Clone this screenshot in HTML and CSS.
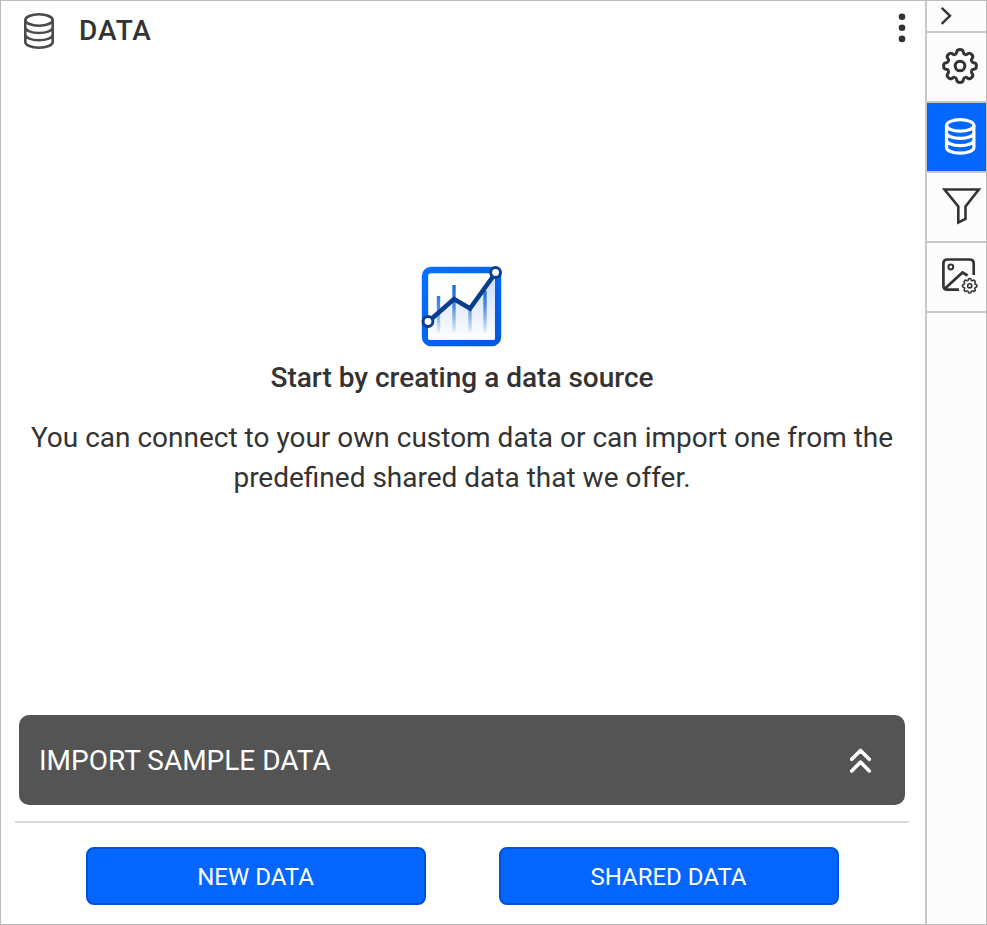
FILE: index.html
```html
<!DOCTYPE html>
<html lang="en">
<head>
<meta charset="utf-8">
<title>Data</title>
<link rel="stylesheet" href="styles.css">
</head>
<body>
<svg class="symbols" aria-hidden="true">
  <defs>
    <path id="tooth" d="M-4.8-11.5C-3.2-12.2-3.5-13.2-3.1-14.6C-2.7-16.1-1.7-16.4 0-16.4S2.7-16.1 3.1-14.6C3.5-13.2 3.2-12.2 4.8-11.5"/>
    <g id="gear">
      <use href="#tooth"/><use href="#tooth" transform="rotate(45)"/><use href="#tooth" transform="rotate(90)"/><use href="#tooth" transform="rotate(135)"/><use href="#tooth" transform="rotate(180)"/><use href="#tooth" transform="rotate(225)"/><use href="#tooth" transform="rotate(270)"/><use href="#tooth" transform="rotate(315)"/>
      <circle r="4.8"/>
    </g>
    <g id="database">
      <ellipse cx="15" cy="7" rx="13.7" ry="5.7"/>
      <path d="M1.3 7V29C1.3 32.2 7.4 34.7 15 34.7S28.7 32.2 28.7 29V7M1.3 14.3C1.3 17.5 7.4 20 15 20S28.7 17.5 28.7 14.3M1.3 21.6C1.3 24.8 7.4 27.3 15 27.3S28.7 24.8 28.7 21.6"/>
    </g>
  </defs>
</svg>
<div class="window">
  <main class="panel">
    <header class="header">
      <svg class="header-icon" width="30" height="36" viewBox="0 0 30 36"><use href="#database"/></svg>
      <h1 class="title">DATA</h1>
      <svg class="more" width="8" height="30" viewBox="0 0 8 30"><circle cx="4" cy="3.700" r="3.3"/><circle cx="4" cy="14.800" r="3.3"/><circle cx="4" cy="25.900" r="3.3"/></svg>
    </header>
    <section class="empty">
      <svg class="chart" width="82" height="82" viewBox="0 0 82 82">
        <defs>
          <linearGradient id="frame" x2="1" y2="1"><stop stop-color="#0870ff"/><stop offset="1" stop-color="#0058dc"/></linearGradient>
          <linearGradient id="bar" gradientUnits="userSpaceOnUse" x1="0" y1="18" x2="0" y2="68"><stop stop-color="#1767d8"/><stop offset=".45" stop-color="#4b88e0"/><stop offset="1" stop-color="#e9f1fc"/></linearGradient>
          <linearGradient id="area" x2="0" y2="1"><stop stop-color="#c9dcf9"/><stop offset="1" stop-color="#fff"/></linearGradient>
        </defs>
        <rect x="4" y="5" width="73" height="73" rx="6" fill="#fff" stroke="url(#frame)" stroke-width="6.400"/>
        <path d="M7.200 57L33 34L49 43L73.800 9V74.800H7.200Z" fill="url(#area)" stroke="none"/>
        <path d="M17.500 31V67M33 20V67M49 43V67M64 26V67" fill="none" stroke="url(#bar)" stroke-width="3.400"/>
        <path d="M7.500 56.500L33 34L49 43.500L74.500 8" class="trend"/>
        <circle cx="7" cy="56.500" r="4.900" class="node"/><circle cx="74.600" cy="7.500" r="4.900" class="node"/>
      </svg>
      <h2 class="heading">Start by creating a data source</h2>
      <p class="message">You can connect to your own custom data or can import one from the predefined shared data that we offer.</p>
    </section>
    <div class="sample">
      <span>IMPORT SAMPLE DATA</span>
      <svg width="22" height="26" viewBox="0 0 22 26"><path d="M1.700 11.300L10.500 2.500L19.300 11.300M1.700 22.900L10.500 14.100L19.300 22.900"/></svg>
    </div>
    <footer class="actions">
      <button class="button">NEW DATA</button>
      <button class="button">SHARED DATA</button>
    </footer>
  </main>
  <nav class="sidebar">
    <div class="tab collapse"><svg width="59" height="30" viewBox="0 0 59 30"><path d="M14.700 6.800L23 14.800L14.700 22.800"/></svg></div>
    <div class="tab"><svg width="59" height="68" viewBox="0 0 59 68"><use href="#gear" x="33" y="33"/></svg></div>
    <div class="tab active"><svg width="59" height="68" viewBox="0 0 59 68"><use href="#database" x="18.200" y="15.400"/></svg></div>
    <div class="tab"><svg width="59" height="68" viewBox="0 0 59 68"><path class="funnel" d="M17.500 16.500H51.800L38.500 33.500V46L31.300 49.500V33.500Z"/></svg></div>
    <div class="tab"><svg width="59" height="68" viewBox="0 0 59 68"><g class="picture"><path d="M32 46.700H20.500Q16.400 46.700 16.400 42.500V20.500Q16.400 16.500 20.500 16.500H42.500Q46.700 16.500 46.700 20.500V32M18 45.500L35.500 29.500L40.500 32.500"/><circle class="sun" cx="23.800" cy="24" r="2.400"/></g><g class="small-gear" transform="translate(42.700 42.800) scale(.44)"><use href="#gear"/></g></svg></div>
  </nav>
</div>
</body>
</html>
```

FILE: styles.css
```css
* { box-sizing: border-box; }
body { margin: 0; font-family: Roboto, sans-serif; color: #333; background: #fff; }
svg { display: block; fill: none; stroke: #333; flex: none; }
.symbols { position: absolute; width: 0; height: 0; }
.window { display: flex; width: 987px; height: 925px; border: 1px solid #bcbcbc; }
.panel { width: 924px; display: flex; flex-direction: column; }
.header { height: 60px; display: flex; align-items: center; padding: 0 19px 0 23px; }
.header-icon { stroke: #4a4a4a; stroke-width: 2.6; }
.title { margin: 0 auto 0 25px; font-size: 28px; line-height: 40px; font-weight: 500; letter-spacing: .9px; }
.more { fill: #333; stroke: none; margin-top: -7px; }
.empty { flex: 1; display: flex; flex-direction: column; align-items: center; padding: 204px 20px 0 18px; }
.trend { stroke: #093e8e; stroke-width: 4.6; }
.node { fill: #fff; stroke: #093e8e; stroke-width: 3; }
.heading { margin: 11px 0 20px; font-size: 28px; line-height: 40px; font-weight: 500; }
.message { margin: 0; font-size: 28px; line-height: 40px; text-align: center; }
.sample { height: 90px; margin: 0 20px 16px 18px; padding: 0 33px 0 20px; display: flex; align-items: center; justify-content: space-between; border-radius: 10px; background: #545454; color: #fff; font-size: 28px; }
.sample svg { stroke: #fff; stroke-width: 3.6; stroke-linecap: round; stroke-linejoin: round; margin-top: 1px; }
.actions { height: 103px; margin: 0 16px 0 14px; padding-top: 24px; border-top: 2px solid #dadada; display: flex; justify-content: center; gap: 73px; }
.button { width: 340px; height: 58px; padding: 2px 0 0; border: 2px solid #0052d6; border-radius: 8px; background: #0465ff; color: #fff; font: 400 24px Roboto, sans-serif; }
.sidebar { width: 61px; border-left: 2px solid #c8c8c8; background: #fcfcfc; }
.tab { height: 70px; border-bottom: 2px solid #c8c8c8; }
.tab svg { stroke-width: 3; }
.collapse { height: 32px; }
.collapse svg { stroke-width: 2.4; }
.active { background: #0465ff; }
.active svg { stroke: #fff; stroke-width: 3.2; }
.tab .funnel { stroke-width: 2.6; }
.tab .picture { stroke-width: 2.7; }
.tab .sun { stroke-width: 2; }
.tab .small-gear { stroke-width: 3.6; }
```
